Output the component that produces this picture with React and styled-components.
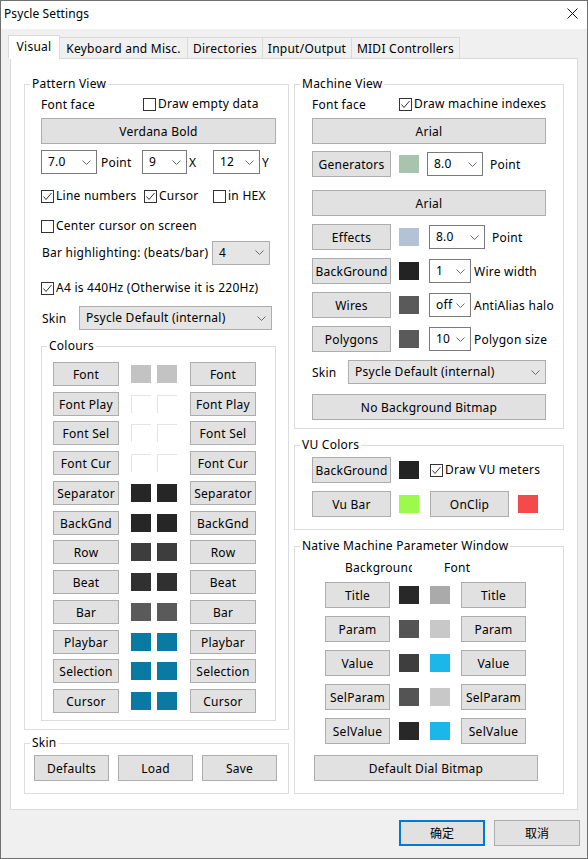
import React from "react";
import styled, { createGlobalStyle } from "styled-components";

const GlobalStyle = createGlobalStyle`
  html, body { margin: 0; padding: 0; background: #f0f0f0; }
  body {
    font-family: "Noto Sans", "Noto Sans CJK SC", sans-serif;
    font-size: 12px;
    letter-spacing: 0.25px;
    color: #000;
  }
  *, *::before, *::after { box-sizing: border-box; }
`;

const Window = styled.div`
  width: 588px;
  height: 859px;
  border: 1px solid #707070;
  background: #f0f0f0;
  display: flex;
  flex-direction: column;
  overflow: hidden;
`;

const TitleBar = styled.header`
  flex: none;
  height: 28px;
  background: #fff;
  display: flex;
  align-items: center;
  justify-content: space-between;
  padding: 0 9px 3px 3px;
  line-height: 16px;
  letter-spacing: 0.1px;
`;

const TabStrip = styled.nav`
  flex: none;
  display: flex;
  align-items: flex-end;
  height: 24px;
  margin: 6px 0 -1px 7px;
  position: relative;
  z-index: 1;
`;

const Tab = styled.div`
  flex: none;
  width: ${(p) => p.$w}px;
  height: ${(p) => (p.$active ? 24 : 22)}px;
  margin-left: ${(p) => (p.$first ? 0 : -1)}px;
  display: flex;
  align-items: center;
  justify-content: center;
  background: ${(p) => (p.$active ? "#fff" : "#f0f0f0")};
  border: 1px solid #d9d9d9;
  border-bottom-color: ${(p) => (p.$active ? "#fff" : "#d9d9d9")};
  line-height: 16px;
  white-space: nowrap;
  padding-top: ${(p) => (p.$active ? 0 : 1)}px;
`;

const Page = styled.main`
  flex: none;
  margin: 0 9px;
  background: #fff;
  border: 1px solid #d9d9d9;
  display: grid;
  grid-template-columns: 265px 270px;
  column-gap: 5px;
  padding: 25px 13px 15px;
  align-items: start;
`;

const Column = styled.div`
  display: flex;
  flex-direction: column;
`;

const Frame = styled.section`
  display: flex;
  flex-direction: column;
  border: 1px solid #dcdcdc;
  margin-top: ${(p) => p.$mt || 0}px;
  padding: 0 ${(p) => p.$pr}px ${(p) => p.$pb}px ${(p) => p.$pl}px;
`;

const Caption = styled.div`
  align-self: flex-start;
  height: 14px;
  line-height: 14px;
  margin: -8px 0 0 ${(p) => p.$ml}px;
  padding: 0 2px;
  background: #fff;
  white-space: nowrap;
`;

const Row = styled.div`
  flex: none;
  display: flex;
  align-items: center;
  height: ${(p) => p.$h || 26}px;
  margin-top: ${(p) => p.$mt || 0}px;
  padding-left: ${(p) => p.$pl || 0}px;
`;

const Label = styled.span`
  flex: none;
  width: ${(p) => (p.$w ? `${p.$w}px` : "auto")};
  margin-left: ${(p) => p.$ml || 0}px;
  padding-left: ${(p) => p.$pad || 0}px;
  padding-top: 1px;
  line-height: 16px;
  white-space: nowrap;
  overflow: hidden;
`;

const Button = styled.button`
  flex: none;
  display: flex;
  align-items: center;
  justify-content: center;
  width: ${(p) => (p.$w ? `${p.$w}px` : "auto")};
  height: ${(p) => p.$h || 26}px;
  margin: ${(p) => p.$mt || 0}px 0 0 ${(p) => p.$ml || 0}px;
  padding: 1px 0 0;
  background: #e1e1e1;
  border: 1px solid #adadad;
  border-radius: 0;
  font: inherit;
  font-size: 12px;
  letter-spacing: 0.25px;
  line-height: 16px;
  color: #000;
  white-space: nowrap;
`;

const Swatch = styled.span`
  flex: none;
  width: 20px;
  height: 18px;
  margin-left: ${(p) => p.$ml || 0}px;
  background: ${(p) => p.$c};
  box-shadow: ${(p) =>
    p.$c === "#ffffff" ? "inset 1px 1px 0 #e4e4e4" : "none"};
`;

const ComboFrame = styled.div`
  flex: ${(p) => (p.$grow ? "1 1 auto" : "none")};
  width: ${(p) => (p.$w ? `${p.$w}px` : "auto")};
  height: 24px;
  margin-left: ${(p) => p.$ml || 0}px;
  display: flex;
  align-items: center;
  justify-content: space-between;
  padding: 0 5px 0 6px;
  background: ${(p) => (p.$list ? "#e5e5e5" : "#fff")};
  border: 1px solid ${(p) => (p.$list ? "#adadad" : "#7a7a7a")};
  line-height: 16px;
  white-space: nowrap;
`;

const CheckField = styled.label`
  flex: none;
  display: flex;
  align-items: center;
  gap: 2px;
  width: ${(p) => (p.$w ? `${p.$w}px` : "auto")};
  margin-left: ${(p) => p.$ml || 0}px;
  line-height: 16px;
  white-space: nowrap;
`;

const Footer = styled.footer`
  flex: none;
  display: flex;
  justify-content: flex-end;
  gap: 9px;
  margin-top: 10px;
  padding-right: 7px;
`;

const DialogButton = styled.button`
  width: 86px;
  height: 26px;
  padding: 0;
  background: #e1e1e1;
  border: ${(p) => (p.$primary ? "2px solid #0078d7" : "1px solid #adadad")};
  border-radius: 0;
  font: inherit;
  font-size: 12px;
  color: #000;
`;

const CloseGlyph = () => (
  <svg width="11" height="11" viewBox="0 0 11 11">
    <path d="M0.5 0.5 L10.5 10.5 M10.5 0.5 L0.5 10.5" stroke="#111" strokeWidth="1" />
  </svg>
);

const Chevron = () => (
  <svg width="9" height="5" viewBox="0 0 9 5">
    <polyline points="0.5,0.5 4.5,4.5 8.5,0.5" fill="none" stroke="#6b6b6b" strokeWidth="1" />
  </svg>
);

const Combo = ({ value, ...rest }) => (
  <ComboFrame {...rest}>
    <span>{value}</span>
    <Chevron />
  </ComboFrame>
);

const Check = ({ checked, children, ...rest }) => (
  <CheckField {...rest}>
    <svg width="13" height="13" viewBox="0 0 13 13">
      <rect x="0.5" y="0.5" width="12" height="12" fill="#fff" stroke="#333" />
      {checked && (
        <polyline points="2.5,6.5 5,9.5 10.5,3" fill="none" stroke="#333" strokeWidth="1" />
      )}
    </svg>
    <span>{children}</span>
  </CheckField>
);

const GroupBox = ({ title, pl, pr, pb, mt, children }) => (
  <Frame $pl={pl} $pr={pr} $pb={pb} $mt={mt}>
    <Caption $ml={5 - pl}>{title}</Caption>
    {children}
  </Frame>
);

const patternColours = [
  ["Font", "#c3c3c3"],
  ["Font Play", "#ffffff"],
  ["Font Sel", "#ffffff"],
  ["Font Cur", "#ffffff"],
  ["Separator", "#262626"],
  ["BackGnd", "#262626"],
  ["Row", "#3d3d3d"],
  ["Beat", "#303030"],
  ["Bar", "#5a5a5a"],
  ["Playbar", "#0b7aa2"],
  ["Selection", "#0b7aa2"],
  ["Cursor", "#0b7aa2"],
];

const paramColours = [
  ["Title", "#282828", "#aaaaaa"],
  ["Param", "#545454", "#c8c8c8"],
  ["Value", "#3e3e3e", "#1bb7e8"],
  ["SelParam", "#545454", "#c8c8c8"],
  ["SelValue", "#282828", "#1bb7e8"],
];

const machineRows = [
  { name: "Effects", color: "#b3c2d4", value: "8.0", w: 56, ml: 10, label: "Point", lml: 7 },
  { name: "BackGround", color: "#232323", value: "1", w: 42, ml: 10, label: "Wire width", lml: 3 },
  { name: "Wires", color: "#5a5a5a", value: "off", w: 42, ml: 10, label: "AntiAlias halo", lml: 3 },
  { name: "Polygons", color: "#5a5a5a", value: "10", w: 42, ml: 10, label: "Polygon size", lml: 3 },
];

// vertical pitch of the colour rows is slightly under 30px
const colourTop = (i) => Math.round(i * 29.727);

export default function App() {
  return (
    <>
      <GlobalStyle />
      <Window>
        <TitleBar>
          <span>Psycle Settings</span>
          <CloseGlyph />
        </TitleBar>

        <TabStrip>
          <Tab $active $first $w={52}>Visual</Tab>
          <Tab $w={129}>Keyboard and Misc.</Tab>
          <Tab $w={76}>Directories</Tab>
          <Tab $w={90}>Input/Output</Tab>
          <Tab $w={109}>MIDI Controllers</Tab>
        </TabStrip>

        <Page>
          <Column>
            <GroupBox title="Pattern View" pl={16} pr={12} pb={8}>
              <Row $h={20} $mt={3}>
                <Label $w={102}>Font face</Label>
                <Check>Draw empty data</Check>
              </Row>
              <Button $mt={4}>Verdana Bold</Button>
              <Row $h={24} $mt={6}>
                <Combo $w={56} value="7.0" />
                <Label $w={45} $pad={4}>Point</Label>
                <Combo $w={45} value="9" />
                <Label $w={26} $pad={2}>X</Label>
                <Combo $w={47} value="12" />
                <Label $pad={2}>Y</Label>
              </Row>
              <Row $h={20} $mt={12}>
                <Check checked $w={103}>Line numbers</Check>
                <Check checked $w={69}>Cursor</Check>
                <Check>in HEX</Check>
              </Row>
              <Row $h={20} $mt={10}>
                <Check>Center cursor on screen</Check>
              </Row>
              <Row $h={25} $mt={4}>
                <Label $w={171} $pad={1}>Bar highlighting: (beats/bar)</Label>
                <Combo $list $w={58} value="4" />
              </Row>
              <Row $h={20} $mt={13}>
                <Check checked>A4 is 440Hz (Otherwise it is 220Hz)</Check>
              </Row>
              <Row $h={24} $mt={8}>
                <Label $w={38} $pad={1}>Skin</Label>
                <Combo $list $w={193} value="Psycle Default (internal)" />
              </Row>

              <GroupBox title="Colours" pl={11} pr={10} pb={7} mt={16}>
                {patternColours.map(([name, color], i) => (
                  <Row
                    key={name}
                    $h={24}
                    $mt={i === 0 ? 9 : colourTop(i) - colourTop(i - 1) - 24}
                  >
                    <Button $w={66} $h={24}>{name}</Button>
                    <Swatch $c={color} $ml={12} />
                    <Swatch $c={color} $ml={6} />
                    <Button $w={66} $h={24} $ml={13}>{name}</Button>
                  </Row>
                ))}
              </GroupBox>
            </GroupBox>

            <GroupBox title="Skin" pl={9} pr={9} pb={12} mt={13}>
              <Row $mt={5}>
                <Button $w={75}>Defaults</Button>
                <Button $w={75} $ml={9}>Load</Button>
                <Button $w={75} $ml={9}>Save</Button>
              </Row>
            </GroupBox>
          </Column>

          <Column>
            <GroupBox title="Machine View" pl={17} pr={17} pb={8}>
              <Row $h={20} $mt={3}>
                <Label $w={87}>Font face</Label>
                <Check checked>Draw machine indexes</Check>
              </Row>
              <Button $mt={4}>Arial</Button>
              <Row $mt={7}>
                <Button $w={79}>Generators</Button>
                <Swatch $c="#a8c4ae" $ml={8} />
                <Combo $w={56} $ml={8} value="8.0" />
                <Label $ml={7}>Point</Label>
              </Row>
              <Button $mt={13}>Arial</Button>
              {machineRows.map((r) => (
                <Row key={r.name} $mt={8}>
                  <Button $w={79}>{r.name}</Button>
                  <Swatch $c={r.color} $ml={8} />
                  <Combo $w={r.w} $ml={r.ml} value={r.value} />
                  <Label $ml={r.lml}>{r.label}</Label>
                </Row>
              ))}
              <Row $h={24} $mt={8}>
                <Label $w={36}>Skin</Label>
                <Combo $list $grow value="Psycle Default (internal)" />
              </Row>
              <Button $mt={10}>No Background Bitmap</Button>
            </GroupBox>

            <GroupBox title="VU Colors" pl={17} pr={17} pb={12} mt={16}>
              <Row $mt={5}>
                <Button $w={79}>BackGround</Button>
                <Swatch $c="#232323" $ml={8} />
                <Check checked $ml={11}>Draw VU meters</Check>
              </Row>
              <Row $mt={8}>
                <Button $w={79}>Vu Bar</Button>
                <Swatch $c="#9cfa4a" $ml={8} />
                <Button $w={79} $ml={11}>OnClip</Button>
                <Swatch $c="#f54a4a" $ml={9} />
              </Row>
            </GroupBox>

            <GroupBox title="Native Machine Parameter Window" pl={17} pr={17} pb={12} mt={16}>
              <Row $h={16} $mt={6}>
                <Label $w={67} $ml={33}>Background</Label>
                <Label $ml={32}>Font</Label>
              </Row>
              {paramColours.map(([name, bg, fg], i) => (
                <Row key={name} $mt={i === 0 ? 7 : 8} $pl={13}>
                  <Button $w={65}>{name}</Button>
                  <Swatch $c={bg} $ml={9} />
                  <Swatch $c={fg} $ml={11} />
                  <Button $w={65} $ml={11}>{name}</Button>
                </Row>
              ))}
              <Row $mt={11} $pl={2}>
                <Button $w={224}>Default Dial Bitmap</Button>
              </Row>
            </GroupBox>
          </Column>
        </Page>

        <Footer>
          <DialogButton $primary>确定</DialogButton>
          <DialogButton>取消</DialogButton>
        </Footer>
      </Window>
    </>
  );
}
